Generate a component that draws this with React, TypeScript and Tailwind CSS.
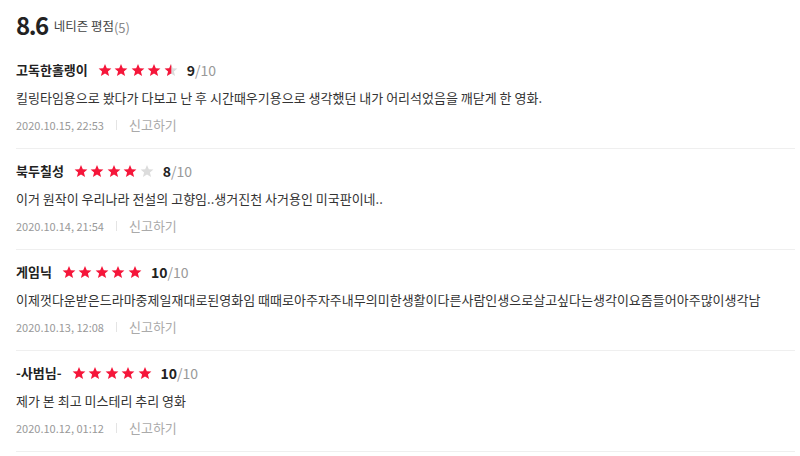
import React from "react";

const FONT = { fontFamily: '"Noto Sans CJK KR", "Noto Sans", sans-serif' };

function Star({ fill }: { fill: "full" | "half" | "empty" }) {
  const red = "#f5163a";
  const gray = "#dcdcdc";
  const d =
    "M7 0.6 L8.8 4.9 L13.4 5.1 L9.9 8.1 L11.1 12.6 L7 10.1 L2.9 12.6 L4.1 8.1 L0.6 5.1 L5.2 4.9 Z";
  return (
    <svg width="14" height="14" viewBox="0 0 14 13.4" className="block">
      <defs>
        <clipPath id="halfclip">
          <rect x="0" y="0" width="7.3" height="14" />
        </clipPath>
      </defs>
      <path d={d} fill={fill === "full" ? red : gray} />
      {fill === "half" && <path d={d} fill={red} clipPath="url(#halfclip)" />}
    </svg>
  );
}

type Review = {
  name: string;
  stars: ("full" | "half" | "empty")[];
  score: string;
  text: string;
  date: string;
};

const reviews: Review[] = [
  {
    name: "고독한홀랭이",
    stars: ["full", "full", "full", "full", "half"],
    score: "9",
    text: "킬링타임용으로 봤다가 다보고 난 후 시간때우기용으로 생각했던 내가 어리석었음을 깨닫게 한 영화.",
    date: "2020.10.15, 22:53",
  },
  {
    name: "북두칠성",
    stars: ["full", "full", "full", "full", "empty"],
    score: "8",
    text: "이거 원작이 우리나라 전설의 고향임..생거진천 사거용인 미국판이네..",
    date: "2020.10.14, 21:54",
  },
  {
    name: "게임닉",
    stars: ["full", "full", "full", "full", "full"],
    score: "10",
    text: "이제껏다운받은드라마중제일재대로된영화임 때때로아주자주내무의미한생활이다른사람인생으로살고싶다는생각이요즘들어아주많이생각남",
    date: "2020.10.13, 12:08",
  },
  {
    name: "-사범님-",
    stars: ["full", "full", "full", "full", "full"],
    score: "10",
    text: "제가 본 최고 미스테리 추리 영화",
    date: "2020.10.12, 01:12",
  },
];

export default function App() {
  return (
    <div className="w-[800px] h-[456px] bg-white overflow-hidden" style={FONT}>
      <div className="pl-4 pr-[5px]">
        <div className="h-[48px] flex items-center pt-[2px]">
          <span className="text-[24px] font-bold text-[#222] tracking-[-1.5px] leading-none">8.6</span>
          <span className="ml-[6px] text-[12.5px] text-[#444] leading-none mt-[3px]">네티즌 평점</span>
          <span className="text-[13px] text-[#888] leading-none mt-[4px]">(5)</span>
        </div>
        {reviews.map((r, i) => (
          <div key={i} className="pt-[12px] pb-[13px] border-b border-[#efefef]">
            <div className="h-[20px] flex items-center">
              <span className="text-[13px] font-bold text-[#222]">{r.name}</span>
              <div className="ml-[10px] flex gap-[2.5px]">
                {r.stars.map((s, j) => (
                  <Star key={j} fill={s} />
                ))}
              </div>
              <span className="ml-[9px] text-[14px] leading-none">
                <span className="font-bold text-[#222]">{r.score}</span>
                <span className="text-[#999]">/10</span>
              </span>
            </div>
            <div className="h-[20px] mt-[8px] flex items-center text-[13px] text-[#333] whitespace-nowrap">
              {r.text}
            </div>
            <div className="h-[20px] mt-[7px] flex items-center text-[11px] text-[#999]">
              <span>{r.date}</span>
              <span className="mx-[12px] w-px h-[10px] bg-[#e4e4e4]" />
              <span className="text-[13px] text-[#aaa]">신고하기</span>
            </div>
          </div>
        ))}
      </div>
    </div>
  );
}
